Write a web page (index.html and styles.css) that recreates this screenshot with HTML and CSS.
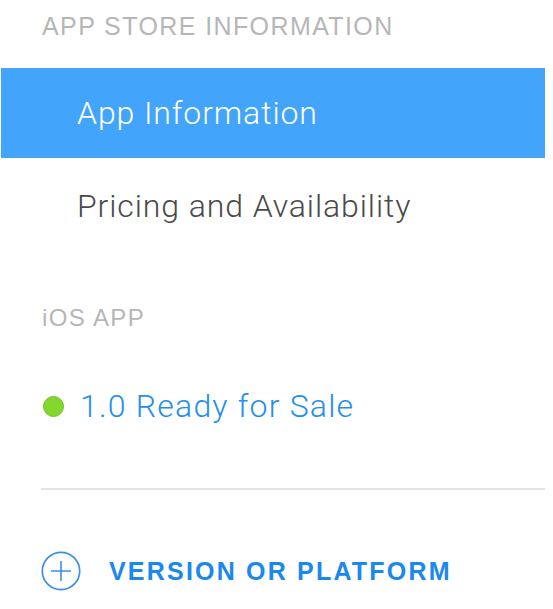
FILE: index.html
```html
<!DOCTYPE html>
<html>
<head>
<meta charset="utf-8">
<link rel="stylesheet" href="styles.css">
</head>
<body>
<nav class="sidebar">
  <div class="section-title first">APP STORE INFORMATION</div>
  <a class="nav-item active">App Information</a>
  <a class="nav-item second-item">Pricing and Availability</a>
  <div class="section-title second">iOS APP</div>
  <a class="version-row"><span class="status-dot"></span><span class="version-text">1.0 Ready for Sale</span></a>
  <hr class="divider">
  <a class="add-row">
    <svg class="add-icon" width="40" height="40" viewBox="0 0 40 40">
      <circle cx="20" cy="20" r="18.7" fill="none" stroke="#3a8fe8" stroke-width="1.7"/>
      <path d="M20 10V30M10 20H30" stroke="#3a8fe8" stroke-width="1.6" fill="none"/>
    </svg>
    <span class="add-text">VERSION OR PLATFORM</span>
  </a>
</nav>
</body>
</html>
```
FILE: styles.css
```css
html, body {
  margin: 0;
  padding: 0;
  background: #ffffff;
}
.sidebar {
  width: 545px;
  display: flex;
  flex-direction: column;
}
.section-title {
  font-family: "Liberation Sans", Arial, sans-serif;
  font-size: 25px;
  line-height: 30px;
  color: #b6b6b6;
  letter-spacing: 1.4px;
  padding-left: 42px;
}
.section-title.first {
  padding-top: 11px;
  height: 57px;
}
.section-title.second {
  margin-top: 52px;
  font-size: 24px;
}
.nav-item {
  display: flex;
  align-items: center;
  height: 90px;
  padding-left: 77px;
  font-family: Roboto, "Liberation Sans", sans-serif;
  font-weight: 300;
  font-size: 32px;
  letter-spacing: 0.9px;
  color: #4a4a4a;
}
.nav-item.active {
  background: #42a5fb;
  color: #ffffff;
  margin-left: 1px;
  padding-left: 76px;
}
.nav-item.second-item {
  padding-top: 3px;
}
.version-row {
  display: flex;
  align-items: center;
  margin-top: 53px;
  padding-left: 43px;
  height: 40px;
  line-height: 40px;
}
.status-dot {
  width: 19px;
  height: 19px;
  border-radius: 50%;
  background: #84d72d;
  border: 1px solid #70c21f;
  margin-right: 16px;
}
.version-text {
  font-family: Roboto, "Liberation Sans", sans-serif;
  font-weight: 300;
  font-size: 32px;
  letter-spacing: 1.2px;
  color: #1f8ef1;
}
.divider {
  margin: 62px 0 0 41px;
  border: none;
  height: 2px;
  background: #e4e4e4;
}
.add-row {
  display: flex;
  align-items: center;
  margin-top: 61px;
  padding-left: 41px;
  height: 40px;
}
.add-icon {
  display: block;
  margin-right: 28px;
}
.add-text {
  font-family: "Liberation Sans", Arial, sans-serif;
  font-weight: 700;
  font-size: 25px;
  letter-spacing: 2.2px;
  color: #1a88ef;
}
```
